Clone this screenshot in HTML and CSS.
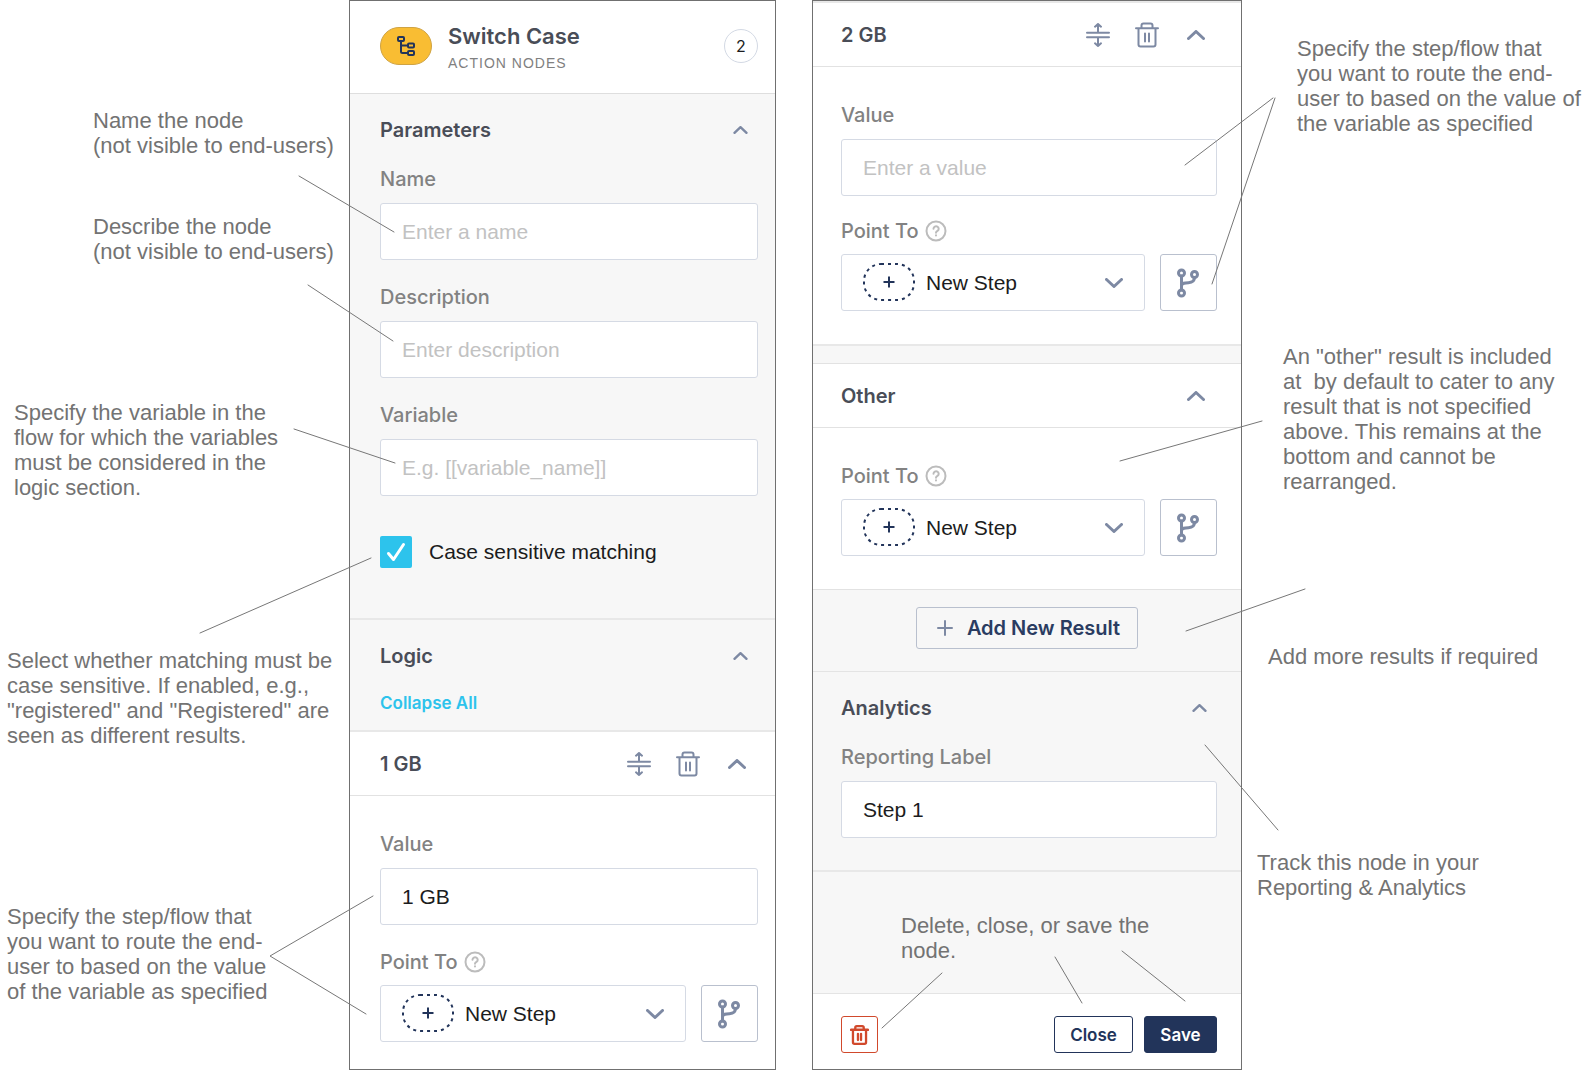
FILE: index.html
```
<!DOCTYPE html>
<html lang="en">
<head>
    <meta charset="UTF-8">
    <meta name="viewport" content="width=device-width, initial-scale=1.0">
    <title>Switch Case node</title>
    <link rel="stylesheet" href="styles.css">
</head>
<body>
    <!-- Shared icons -->
    <svg class="sprite" aria-hidden="true">
        <symbol id="icon-up" viewBox="0 0 18 10"><path d="M1.500 8.500 9 1.500l7.500 7"/></symbol>
        <symbol id="icon-down" viewBox="0 0 18 10"><path d="M1.500 1.500 9 8.500l7.500-7"/></symbol>
        <symbol id="icon-plus" viewBox="0 0 16 16"><path d="M8 1v14M1 8h14"/></symbol>
        <symbol id="icon-move" viewBox="0 0 24 24">
            <path d="M1 9.800h22M1 14.200h22M12 9.500V1M9 3.700 12 1l3 2.700M12 14.500V23M9 20.300 12 23l3-2.700"/>
        </symbol>
        <symbol id="icon-trash" viewBox="0 0 24 26">
            <path d="M1 6.200h22M3.500 6.200V22.500a2 2 0 0 0 2 2h13a2 2 0 0 0 2-2V6.200M6.500 6V3.500a2 2 0 0 1 2-2h7a2 2 0 0 1 2 2V6M10 11.500v8M14 11.500v8"/>
        </symbol>
        <symbol id="icon-help" viewBox="0 0 22 22">
            <circle cx="11" cy="11" r="9.500"/>
            <path d="M8.500 8.700a2.600 2.400 0 1 1 4 2.100c-.9.600-1.500 1-1.500 1.900M11 15.200v.3"/>
        </symbol>
        <symbol id="icon-branch" viewBox="0 0 24 30">
            <circle cx="4.500" cy="5" r="3"/><circle cx="17.500" cy="6.500" r="3"/><circle cx="4.500" cy="25" r="3"/>
            <path d="M4.500 8V22M17.500 9.500c0 4-2.500 5-6 5.200-4 .2-6.500.3-7 2.800"/>
        </symbol>
        <symbol id="icon-new" viewBox="0 0 52 38">
            <rect class="dashes" x="1" y="1" width="50" height="36" rx="17"/>
            <path d="M26 13.500v11M20.500 19h11"/>
        </symbol>
    </svg>

    <main class="guide">
        <div class="notes">
            <p class="note note-name">Name the node<br>(not visible to end-users)</p>
            <p class="note note-description">Describe the node<br>(not visible to end-users)</p>
            <p class="note note-variable">Specify the variable in the<br>flow for which the variables<br>must be considered in the<br>logic section.</p>
            <p class="note note-matching">Select whether matching must be<br>case sensitive. If enabled, e.g.,<br>"registered" and "Registered" are<br>seen as different results.</p>
            <p class="note note-step">Specify the step/flow that<br>you want to route the end-<br>user to based on the value<br>of the variable as specified</p>
        </div>

        <section class="panel panel-first">
            <header class="node-header">
                <span class="node-icon">
                    <svg viewBox="0 0 20 22" width="20" height="22">
                        <rect x="2" y="2" width="6" height="4" rx="1"/>
                        <rect x="12" y="8.500" width="6" height="4" rx="1"/>
                        <rect x="12" y="16" width="6" height="4" rx="1"/>
                        <path d="M5 6v10.500a1.500 1.500 0 0 0 1.500 1.500H12M5 10.500h7"/>
                    </svg>
                </span>
                <div class="node-title">
                    <h1>Switch Case</h1>
                    <p>ACTION NODES</p>
                </div>
                <span class="count">2</span>
            </header>

            <div class="section">
                <div class="section-head">
                    <h2>Parameters</h2>
                    <button class="toggle" type="button" aria-label="Collapse parameters"><svg><use href="#icon-up"/></svg></button>
                </div>
                <div class="fields">
                    <div class="field">
                        <label for="name">Name</label>
                        <input type="text" id="name" placeholder="Enter a name">
                    </div>
                    <div class="field">
                        <label for="description">Description</label>
                        <input type="text" id="description" placeholder="Enter description">
                    </div>
                    <div class="field">
                        <label for="variable">Variable</label>
                        <input type="text" id="variable" placeholder="E.g. [[variable_name]]">
                    </div>
                </div>
                <div class="check">
                    <span class="check-box">
                        <input type="checkbox" id="case" checked>
                        <svg viewBox="0 0 32 32"><path d="M8.500 17.500l5 6L23.500 8.500"/></svg>
                    </span>
                    <label for="case">Case sensitive matching</label>
                </div>
            </div>

            <div class="section section-logic">
                <div class="section-head">
                    <h2>Logic</h2>
                    <button class="toggle" type="button" aria-label="Collapse logic"><svg><use href="#icon-up"/></svg></button>
                </div>
                <a class="collapse" href="#results">Collapse All</a>
            </div>

            <article class="result" id="results">
                <div class="result-head">
                    <h2>1 GB</h2>
                    <button type="button" aria-label="Move"><svg class="move"><use href="#icon-move"/></svg></button>
                    <button type="button" aria-label="Delete"><svg class="trash"><use href="#icon-trash"/></svg></button>
                    <button type="button" aria-label="Collapse"><svg class="chevron"><use href="#icon-up"/></svg></button>
                </div>
                <div class="result-body fields">
                    <div class="field">
                        <label for="value-1">Value</label>
                        <input type="text" id="value-1" value="1 GB">
                    </div>
                    <div class="field point">
                        <label for="point-1">Point To <svg class="help"><use href="#icon-help"/></svg></label>
                        <div class="point-row">
                            <div class="picker">
                                <select id="point-1"><option>New Step</option></select>
                                <svg class="new"><use href="#icon-new"/></svg>
                                <svg class="chevron"><use href="#icon-down"/></svg>
                            </div>
                            <button class="branch" type="button" aria-label="Go to flow"><svg><use href="#icon-branch"/></svg></button>
                        </div>
                    </div>
                </div>
            </article>
        </section>

        <section class="panel panel-second">
            <article class="result result-line">
                <div class="result-head">
                    <h2>2 GB</h2>
                    <button type="button" aria-label="Move"><svg class="move"><use href="#icon-move"/></svg></button>
                    <button type="button" aria-label="Delete"><svg class="trash"><use href="#icon-trash"/></svg></button>
                    <button type="button" aria-label="Collapse"><svg class="chevron"><use href="#icon-up"/></svg></button>
                </div>
                <div class="result-body fields">
                    <div class="field">
                        <label for="value-2">Value</label>
                        <input type="text" id="value-2" placeholder="Enter a value">
                    </div>
                    <div class="field point">
                        <label for="point-2">Point To <svg class="help"><use href="#icon-help"/></svg></label>
                        <div class="point-row">
                            <div class="picker">
                                <select id="point-2"><option>New Step</option></select>
                                <svg class="new"><use href="#icon-new"/></svg>
                                <svg class="chevron"><use href="#icon-down"/></svg>
                            </div>
                            <button class="branch" type="button" aria-label="Go to flow"><svg><use href="#icon-branch"/></svg></button>
                        </div>
                    </div>
                </div>
            </article>

            <article class="result result-other">
                <div class="result-head">
                    <h2>Other</h2>
                    <button type="button" aria-label="Collapse"><svg class="chevron"><use href="#icon-up"/></svg></button>
                </div>
                <div class="result-body fields">
                    <div class="field point">
                        <label for="point-3">Point To <svg class="help"><use href="#icon-help"/></svg></label>
                        <div class="point-row">
                            <div class="picker">
                                <select id="point-3"><option>New Step</option></select>
                                <svg class="new"><use href="#icon-new"/></svg>
                                <svg class="chevron"><use href="#icon-down"/></svg>
                            </div>
                            <button class="branch" type="button" aria-label="Go to flow"><svg><use href="#icon-branch"/></svg></button>
                        </div>
                    </div>
                </div>
            </article>

            <div class="add-row">
                <button class="add-btn" type="button"><svg><use href="#icon-plus"/></svg>Add New Result</button>
            </div>

            <div class="section section-analytics">
                <div class="section-head">
                    <h2>Analytics</h2>
                    <button class="toggle" type="button" aria-label="Collapse analytics"><svg><use href="#icon-up"/></svg></button>
                </div>
                <div class="field">
                    <label for="report">Reporting Label</label>
                    <input type="text" id="report" value="Step 1">
                </div>
            </div>

            <div class="panel-rest">
                <p class="note">Delete, close, or save the<br>node.</p>
            </div>

            <footer class="actions">
                <button class="delete-btn" type="button" aria-label="Delete node"><svg><use href="#icon-trash"/></svg></button>
                <button class="close-btn" type="button">Close</button>
                <button class="save-btn" type="button">Save</button>
            </footer>
        </section>

        <div class="notes">
            <p class="note note-route">Specify the step/flow that<br>you want to route the end-<br>user to based on the value of<br>the variable as specified</p>
            <p class="note note-other">An "other" result is included<br>at&nbsp; by default to cater to any<br>result that is not specified<br>above. This remains at the<br>bottom and cannot be<br>rearranged.</p>
            <p class="note note-add">Add more results if required</p>
            <p class="note note-track">Track this node in your<br>Reporting &amp; Analytics</p>
        </div>

        <!-- Lines from the notes to the controls -->
        <svg class="lines" viewBox="0 0 1586 1070" preserveAspectRatio="none" aria-hidden="true">
            <path d="M299 176 394 232M308 285 393 341M294 429 395 463M200 633 371 558"/>
            <path d="M373 896 270 956 366 1014"/>
            <path d="M1273 98 1185 165M1275 98 1212 284"/>
            <path d="M1262 421 1120 461M1305 589 1186 631M1205 745 1278 830"/>
            <path d="M942 973 882 1028M1055 957 1082 1003M1122 951 1185 1001"/>
        </svg>
    </main>
</body>
</html>
```
FILE: styles.css
```
* {
    box-sizing: border-box;
}

body {
    margin: 0;
    background-color: #fff;
    font-family: "Liberation Sans", Arial, sans-serif;
    font-size: 21px;
    color: #1b1c20;
}

h1, h2, p {
    margin: 0;
}

button, input, select {
    font: inherit;
    color: inherit;
}

button {
    display: flex;
    justify-content: center;
    align-items: center;
    padding: 0;
    border: none;
    background: none;
    cursor: pointer;
}

svg {
    display: block;
    fill: none;
    stroke: #7d89a3;
    stroke-width: 2;
    stroke-linecap: round;
    stroke-linejoin: round;
}

.sprite {
    position: absolute;
    width: 0;
    height: 0;
}

.guide {
    position: relative;
    display: grid;
    grid-template-columns: minmax(0, 349fr) minmax(0, 427fr) minmax(0, 36fr) minmax(0, 430fr) minmax(0, 344fr);
    min-height: 100vh;
}

.panel-second {
    grid-column: 4;
}

/* Notes */
.note {
    font-size: 22px;
    line-height: 25px;
    color: #737373;
    white-space: nowrap;
}

.note-name {
    margin: 108px 0 0 93px;
}

.note-description {
    margin: 56px 0 0 93px;
}

.note-variable {
    margin: 136px 0 0 14px;
}

.note-matching {
    margin: 148px 0 0 7px;
}

.note-step {
    margin: 156px 0 0 7px;
}

.note-route {
    margin: 36px 0 0 55px;
}

.note-other {
    margin: 208px 0 0 41px;
}

.note-add {
    margin: 150px 0 0 26px;
}

.note-track {
    margin: 181px 0 0 15px;
}

.lines {
    position: absolute;
    top: 0;
    left: 0;
    width: 100%;
    height: 100%;
    stroke: #777;
    stroke-width: 1;
    pointer-events: none;
}

/* Panels */
.panel {
    display: flex;
    flex-direction: column;
    border: 1px solid #707070;
    background-color: #f7f7f7;
    --left: 30px;
    --right: 17px;
    --gap: 25px;
}

.panel-second {
    --left: 28px;
    --right: 24px;
    --gap: 23px;
}

.node-header {
    display: flex;
    align-items: center;
    height: 93px;
    padding: 0 var(--right) 2px var(--left);
    border-bottom: 1px solid #dedede;
    background-color: #fff;
}

.node-icon {
    display: flex;
    justify-content: center;
    align-items: center;
    width: 52px;
    height: 38px;
    border: 1px solid #cfa343;
    border-radius: 19px;
    background-color: #f9bd33;
}

.node-icon svg {
    stroke: #22345a;
}

.node-title {
    flex: 1;
    margin-left: 16px;
    padding-top: 4px;
}

.node-title h1 {
    font: 600 22px/30px Inter, sans-serif;
    color: #494d57;
}

.node-title p {
    font-size: 14px;
    line-height: 24px;
    letter-spacing: 1px;
    color: #808080;
}

.count {
    width: 34px;
    border: 1px solid #d3d9e4;
    border-radius: 50%;
    font: 16px/32px Inter, sans-serif;
    text-align: center;
}

.section {
    padding: 21px var(--right) 50px var(--left);
    border-bottom: 2px solid #e8e8e8;
}

.section-logic {
    padding-bottom: 15px;
}

.section-analytics {
    padding-bottom: 32px;
}

.section-head {
    display: flex;
    justify-content: space-between;
    margin-bottom: 22px;
}

.section-logic .section-head {
    margin-bottom: 20px;
}

h2 {
    flex: 1;
    font: 600 20px/30px Inter, sans-serif;
    color: #494d57;
}

.toggle {
    width: 36px;
}

.toggle svg {
    width: 15px;
    height: 8px;
    stroke-width: 3;
}

.collapse {
    display: block;
    font: 600 17px/24px Inter, sans-serif;
    color: #2dc3ec;
    text-decoration: none;
}

/* Fields */
.fields {
    display: flex;
    flex-direction: column;
    gap: var(--gap);
}

.field {
    display: flex;
    flex-direction: column;
    gap: 12px;
}

.point {
    gap: 11px;
}

.field label {
    display: flex;
    align-items: center;
    gap: 6px;
    font: 500 20px/24px Inter, sans-serif;
    color: #828282;
}

.field input, .picker select {
    width: 100%;
    height: 57px;
    padding: 0 21px;
    border: 1px solid #d5dae4;
    border-radius: 3px;
    background-color: #fff;
}

.field input::placeholder {
    color: #c2c2c2;
}

.help {
    width: 22px;
    height: 22px;
    stroke: #bcbcbc;
}

.point-row {
    display: flex;
    gap: 15px;
}

.picker {
    position: relative;
    flex: 1;
}

.picker select {
    display: block;
    padding-left: 84px;
    appearance: none;
}

.picker svg {
    position: absolute;
    pointer-events: none;
}

.picker .new {
    top: 9px;
    left: 22px;
    width: 52px;
    height: 38px;
    stroke: #22345a;
    stroke-linecap: butt;
}

.dashes {
    stroke-dasharray: 3 4;
}

.chevron {
    width: 18px;
    height: 10px;
    stroke-width: 3;
}

.picker .chevron {
    top: 24px;
    right: 22px;
}

.branch {
    width: 57px;
    height: 57px;
    border: 1px solid #b9c0ce;
    border-radius: 3px;
    background-color: #fff;
}

.branch svg {
    width: 24px;
    height: 30px;
    stroke-width: 3;
}

.check {
    display: flex;
    align-items: center;
    gap: 17px;
    margin-top: 40px;
}

.check-box {
    position: relative;
    width: 32px;
    height: 32px;
}

.check-box input {
    display: block;
    width: 32px;
    height: 32px;
    margin: 0;
    border-radius: 2px;
    background-color: #2dc3ec;
    appearance: none;
}

.check-box svg {
    position: absolute;
    top: 0;
    left: 0;
    width: 32px;
    height: 32px;
    stroke: #fff;
    stroke-width: 3;
    pointer-events: none;
}

/* Results */
.result {
    background-color: #fff;
}

.result-line {
    border-top: 2px solid #e8e8e8;
    border-bottom: 2px solid #e8e8e8;
}

.result-other {
    margin-top: 17px;
    border-top: 1px solid #e2e2e2;
    border-bottom: 1px solid #e2e2e2;
}

.result-head {
    display: flex;
    align-items: center;
    gap: 7px;
    height: 64px;
    padding: 0 var(--right) 0 var(--left);
    border-bottom: 1px solid #e2e2e2;
}

.result-head button {
    width: 42px;
    height: 42px;
}

.move {
    width: 24px;
    height: 24px;
}

.trash {
    width: 24px;
    height: 26px;
}

.result-body {
    padding: 36px var(--right) 33px var(--left);
}

.panel-first .result-body {
    padding-bottom: 27px;
}

.panel-first .result {
    flex: 1;
}

.add-row {
    display: flex;
    justify-content: center;
    padding: 17px 0 22px;
    border-bottom: 1px solid #e4e4e4;
}

.add-btn {
    gap: 14px;
    height: 42px;
    padding: 0 17px 0 20px;
    border: 1px solid #b9c0ce;
    border-radius: 3px;
    font: 600 20px/30px Inter, sans-serif;
    color: #2a3c61;
}

.add-btn svg {
    width: 16px;
    height: 16px;
}

.panel-rest {
    flex: 1;
    padding: 41px 0 30px 88px;
}

.actions {
    display: flex;
    gap: 11px;
    padding: 22px var(--right) 16px var(--left);
    border-top: 1px solid #e4e4e4;
    background-color: #fff;
}

.actions button {
    height: 37px;
    border: 1px solid #22345a;
    border-radius: 3px;
    font: 600 17px/24px Inter, sans-serif;
    color: #22345a;
}

.actions .delete-btn {
    width: 37px;
    margin-right: auto;
    border-color: #d1492c;
}

.delete-btn svg {
    width: 19px;
    height: 20px;
    stroke: #d1492c;
    stroke-width: 3;
}

.actions .close-btn {
    width: 79px;
}

.actions .save-btn {
    width: 73px;
    background-color: #22345a;
    color: #fff;
}
```
